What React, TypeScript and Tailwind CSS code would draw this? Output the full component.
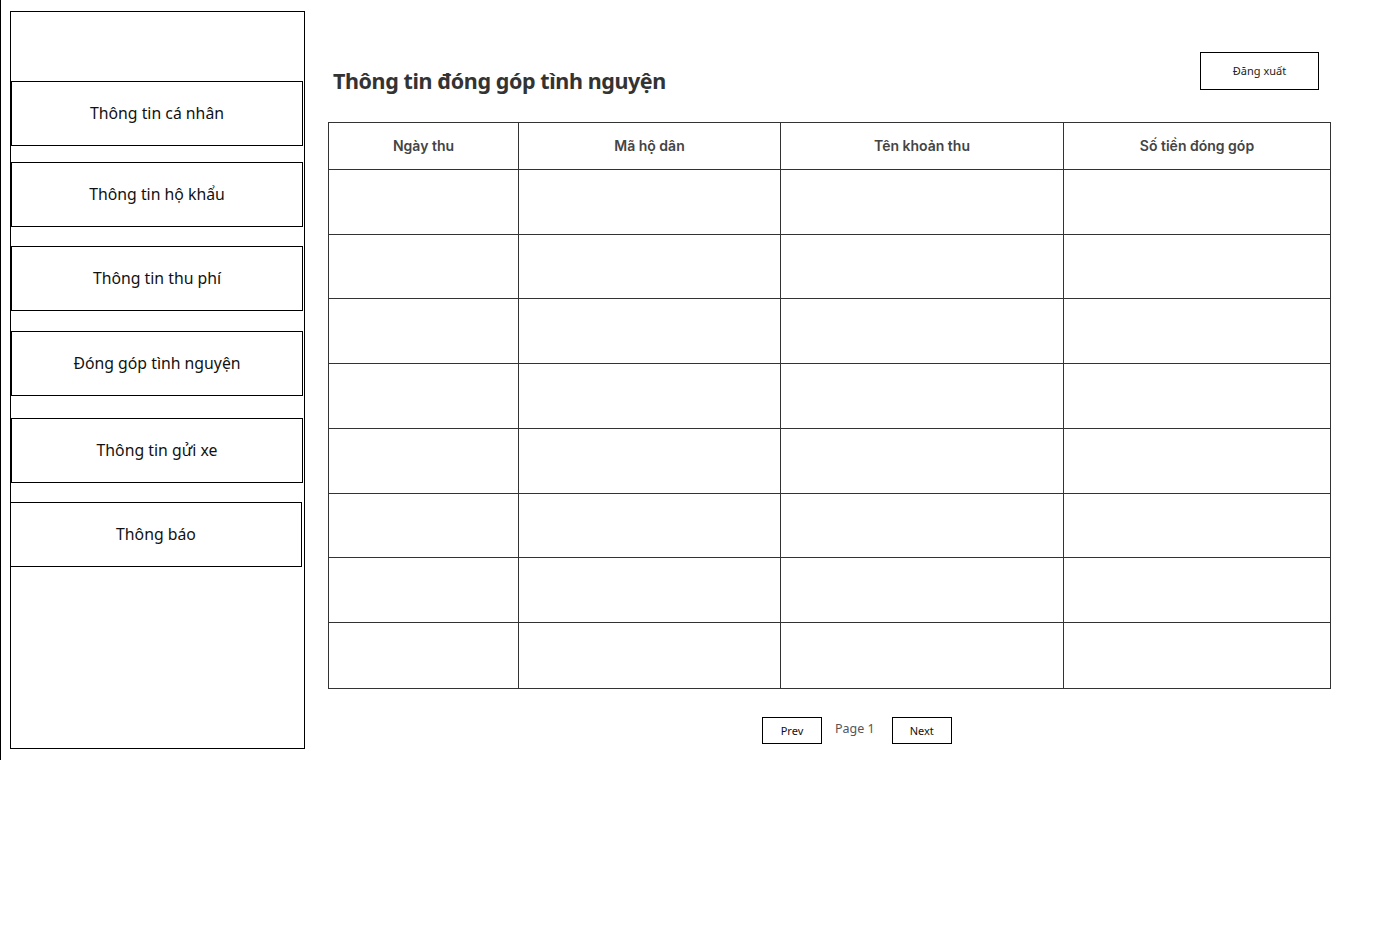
import React from "react";

const navItems = [
  { label: "Thông tin cá nhân", cls: "mt-[69px] ml-[0px] w-[292px]" },
  { label: "Thông tin hộ khẩu", cls: "mt-[16px] ml-[0px] w-[292px]" },
  { label: "Thông tin thu phí", cls: "mt-[19px] ml-[0px] w-[292px]" },
  { label: "Đóng góp tình nguyện", cls: "mt-[20px] ml-[0px] w-[292px]" },
  { label: "Thông tin gửi xe", cls: "mt-[22px] ml-[0px] w-[292px]" },
  { label: "Thông báo", cls: "mt-[19px] ml-[-1px] w-[292px]" },
];

const headers = ["Ngày thu", "Mã hộ dân", "Tên khoản thu", "Số tiền đóng góp"];
const colW = ["w-[190px]", "w-[262px]", "w-[283px]", "w-[267px]"];
const rowH = ["h-[65px]", "h-[64px]", "h-[65px]", "h-[65px]", "h-[65px]", "h-[64px]", "h-[65px]", "h-[66px]"];

export default function App() {
  return (
    <div className="w-[1382px] h-[938px] bg-white" style={{ fontFamily: '"Noto Sans", sans-serif' }}>
      <div className="flex items-start h-[760px] border-l border-black">
        {/* Sidebar */}
        <div className="ml-[9px] mt-[11px] w-[295px] h-[738px] border border-black flex flex-col">
          {navItems.map((n) => (
            <div
              key={n.label}
              className={`${n.cls} h-[65px] border border-black flex items-center justify-center text-[15.8px] text-[#111]`}
            >
              {n.label}
            </div>
          ))}
        </div>

        {/* Main */}
        <div className="ml-[23px] w-[1003px] flex flex-col">
          <div className="flex items-start justify-between h-[122px]">
            <h1 className="mt-[64px] ml-[5px] text-[21.5px] font-bold text-[#333] leading-[34px] tracking-[-0.4px]">
              Thông tin đóng góp tình nguyện
            </h1>
            <button className="mt-[52px] mr-[12px] w-[119px] h-[38px] border border-black text-[11px] text-[#222] bg-white">
              Đăng xuất
            </button>
          </div>

          <table className="border-collapse border border-black w-[1002px]" style={{ tableLayout: "fixed" }}>
            <thead>
              <tr className="h-[47px]">
                {headers.map((h, i) => (
                  <th
                    key={h}
                    className={`${colW[i]} border border-[#333] text-[14px] font-semibold text-[#444] pb-[1px]`}
                    style={{ fontFamily: "Inter, sans-serif" }}
                  >
                    {h}
                  </th>
                ))}
              </tr>
            </thead>
            <tbody>
              {rowH.map((hc, r) => (
                <tr key={r} className={hc}>
                  {headers.map((h) => (
                    <td key={h} className="border border-[#333]"></td>
                  ))}
                </tr>
              ))}
            </tbody>
          </table>

          <div className="flex items-center mt-[28px] ml-[434px] gap-[13px]">
            <button className="w-[60px] h-[27px] border border-black text-[11px] text-[#111] bg-white pt-[2px]">
              Prev
            </button>
            <span className="text-[12.5px] text-[#555] mb-[2px]">Page 1</span>
            <button className="w-[60px] h-[27px] border border-black text-[11px] text-[#111] bg-white pt-[2px] ml-[4px]">
              Next
            </button>
          </div>
        </div>
      </div>
    </div>
  );
}
